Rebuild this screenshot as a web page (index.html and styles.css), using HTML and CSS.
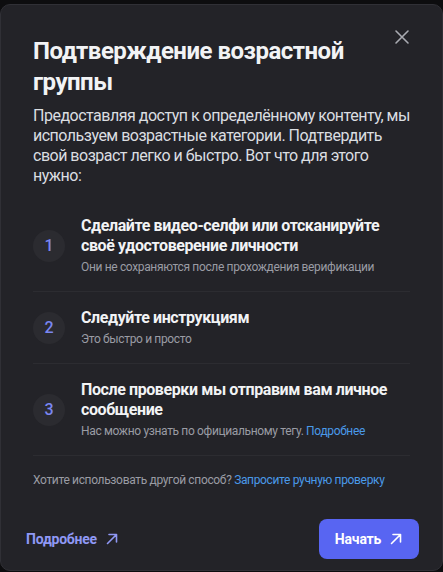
FILE: index.html
```html
<!DOCTYPE html>
<html lang="ru">
<head>
  <meta charset="utf-8">
  <title>Подтверждение возрастной группы</title>
  <link rel="stylesheet" href="styles.css">
</head>
<body>
  <div class="modal">
    <button class="close" aria-label="Закрыть">
      <svg width="16" height="16" viewBox="0 0 16 16"><path d="M2 2 L14 14 M14 2 L2 14" stroke="currentColor" stroke-width="1.6" stroke-linecap="round"/></svg>
    </button>

    <div class="content">
      <h1>Подтверждение возрастной группы</h1>
      <p class="intro">Предоставляя доступ к определённому контенту, мы используем возрастные категории. Подтвердить свой возраст легко и быстро. Вот что для этого нужно:</p>

      <ul class="steps">
        <li class="step">
          <span class="num">1</span>
          <div class="step-text">
            <div class="step-title">Сделайте видео-селфи или отсканируйте своё удостоверение личности</div>
            <div class="step-sub">Они не сохраняются после прохождения верификации</div>
          </div>
        </li>
        <li class="step">
          <span class="num">2</span>
          <div class="step-text">
            <div class="step-title">Следуйте инструкциям</div>
            <div class="step-sub">Это быстро и просто</div>
          </div>
        </li>
        <li class="step">
          <span class="num">3</span>
          <div class="step-text">
            <div class="step-title">После проверки мы отправим вам личное сообщение</div>
            <div class="step-sub">Нас можно узнать по официальному тегу. <a href="#">Подробнее</a></div>
          </div>
        </li>
      </ul>

      <p class="alt">Хотите использовать другой способ? <a href="#">Запросите ручную проверку</a></p>
    </div>

    <div class="footer">
      <a class="more" href="#">Подробнее
        <svg width="14" height="14" viewBox="0 0 14 14"><path d="M2.5 11.5 L11 3 M4 2.5 H11.5 V10" fill="none" stroke="currentColor" stroke-width="1.6" stroke-linecap="round" stroke-linejoin="round"/></svg>
      </a>
      <button class="start">Начать
        <svg width="14" height="14" viewBox="0 0 14 14"><path d="M2.5 11.5 L11 3 M4 2.5 H11.5 V10" fill="none" stroke="currentColor" stroke-width="1.6" stroke-linecap="round" stroke-linejoin="round"/></svg>
      </button>
    </div>
  </div>
</body>
</html>
```

FILE: styles.css
```css
/* Age verification modal */
html, body {
  margin: 0;
  padding: 0;
  height: 100%;
  overflow: hidden;
}
body {
  background-color: #0d0d0f;
  font-family: Roboto, "Liberation Sans", Arial, sans-serif;
  padding-top: 4px;
  box-sizing: border-box;
}
.modal {
  position: relative;
  background-color: #232328;
  border: 1px solid #303036;
  border-radius: 10px;
  height: 567px;
  box-sizing: border-box;
  display: flex;
  flex-direction: column;
}
.close {
  position: absolute;
  top: 24px;
  right: 31px;
  width: 18px;
  height: 18px;
  padding: 0;
  border: none;
  background: none;
  color: #a9abb2;
  cursor: pointer;
}
.content {
  padding: 31px 32px 0;
}
h1 {
  margin: 0;
  font-size: 24px;
  line-height: 31px;
  font-weight: 700;
  letter-spacing: -0.5px;
  color: #f2f3f5;
  padding-right: 30px;
}
.intro {
  margin: 8px -3px 0 0;
  font-size: 16px;
  line-height: 20px;
  letter-spacing: -0.5px;
  color: #dbdee1;
}
.steps {
  list-style: none;
  margin: 14px 0 0;
  padding: 0;
}
.step {
  display: flex;
  align-items: center;
  gap: 16px;
  padding: 16px 0;
  border-bottom: 1px solid #2c2c31;
}
.num {
  flex: none;
  width: 32px;
  height: 32px;
  border-radius: 50%;
  background-color: #2b2b30;
  color: #7a86f0;
  font-size: 16px;
  font-weight: 500;
  display: flex;
  align-items: center;
  justify-content: center;
}
.step-title {
  font-size: 16px;
  line-height: 20px;
  font-weight: 700;
  letter-spacing: -0.4px;
  color: #f2f3f5;
}
.step-sub {
  margin-top: 3px;
  font-size: 12px;
  line-height: 16px;
  letter-spacing: -0.35px;
  color: #9a9ca4;
}
a {
  color: #4a9ae8;
  text-decoration: none;
}
.alt {
  margin: 16px 0 0;
  font-size: 12px;
  line-height: 16px;
  letter-spacing: -0.34px;
  color: #9a9ca4;
}
.footer {
  margin-top: auto;
  padding: 0 23px 11px 25px;
  display: flex;
  align-items: center;
  justify-content: space-between;
}
.more {
  display: flex;
  align-items: center;
  gap: 8px;
  color: #8f98f5;
  font-size: 14px;
  font-weight: 700;
  letter-spacing: -0.2px;
}
.start {
  display: flex;
  align-items: center;
  justify-content: center;
  gap: 8px;
  width: 100px;
  height: 40px;
  border: none;
  border-radius: 8px;
  background-color: #5865f2;
  color: #fff;
  font-family: inherit;
  font-size: 14px;
  font-weight: 700;
  letter-spacing: -0.2px;
  cursor: pointer;
}
```
